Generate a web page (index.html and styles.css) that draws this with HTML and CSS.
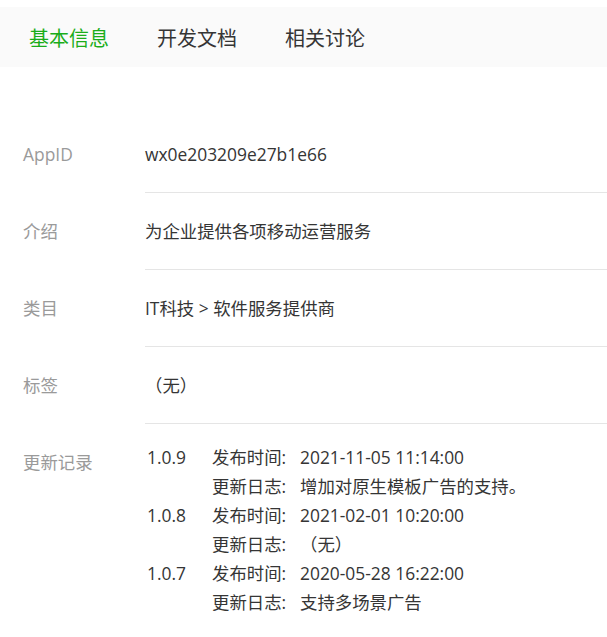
FILE: index.html
```html
<!DOCTYPE html>
<html lang="zh-CN">
<head>
    <meta charset="UTF-8">
    <meta name="viewport" content="width=device-width, initial-scale=1.0">
    <title>基本信息</title>
    <link rel="stylesheet" href="styles.css">
</head>
<body>
    <div class="tabs">
        <div class="tab active">基本信息</div>
        <div class="tab">开发文档</div>
        <div class="tab">相关讨论</div>
    </div>

    <div class="info-list">
        <div class="info-row">
            <div class="info-label">AppID</div>
            <div class="info-value">wx0e203209e27b1e66</div>
        </div>
        <div class="info-row">
            <div class="info-label">介绍</div>
            <div class="info-value">为企业提供各项移动运营服务</div>
        </div>
        <div class="info-row">
            <div class="info-label">类目</div>
            <div class="info-value">IT科技 &gt; 软件服务提供商</div>
        </div>
        <div class="info-row">
            <div class="info-label">标签</div>
            <div class="info-value">（无）</div>
        </div>
        <div class="info-row">
            <div class="info-label">更新记录</div>
            <div class="info-value records">
                <div class="record">
                    <span class="version">1.0.9</span>
                    <span class="key">发布时间:</span>
                    <span>2021-11-05 11:14:00</span>
                    <span></span>
                    <span class="key">更新日志:</span>
                    <span>增加对原生模板广告的支持。</span>
                </div>
                <div class="record">
                    <span class="version">1.0.8</span>
                    <span class="key">发布时间:</span>
                    <span>2021-02-01 10:20:00</span>
                    <span></span>
                    <span class="key">更新日志:</span>
                    <span>（无）</span>
                </div>
                <div class="record">
                    <span class="version">1.0.7</span>
                    <span class="key">发布时间:</span>
                    <span>2020-05-28 16:22:00</span>
                    <span></span>
                    <span class="key">更新日志:</span>
                    <span>支持多场景广告</span>
                </div>
            </div>
        </div>
    </div>
</body>
</html>
```

FILE: styles.css
```css
body {
    margin: 0;
    font-family: "Open Sans", "Noto Sans CJK SC", sans-serif;
    font-size: 17.4px;
    color: #353535;
    background: #fff;
}

.tabs {
    margin-top: 7px;
    height: 60px;
    background: #fafafa;
    display: flex;
    align-items: center;
    padding-left: 29px;
    gap: 48px;
}

.tab {
    font-size: 20px;
    color: #353535;
}

.tab.active {
    color: #1aad19;
}

.info-list {
    margin-top: 49px;
}

.info-row {
    display: flex;
}

.info-label {
    width: 122px;
    padding-left: 23px;
    padding-top: 26px;
    line-height: 24px;
    color: #9a9a9a;
    flex-shrink: 0;
}

.info-value {
    flex: 1;
    padding: 26px 0 26px;
    line-height: 24px;
    border-bottom: 1px solid #e5e5e5;
}

.info-value.records {
    padding-top: 19px;
    padding-left: 2px;
    border-bottom: none;
    line-height: 29px;
}

.record {
    display: grid;
    grid-template-columns: 65px 88px auto;
}

.key {
    white-space: nowrap;
}
```
